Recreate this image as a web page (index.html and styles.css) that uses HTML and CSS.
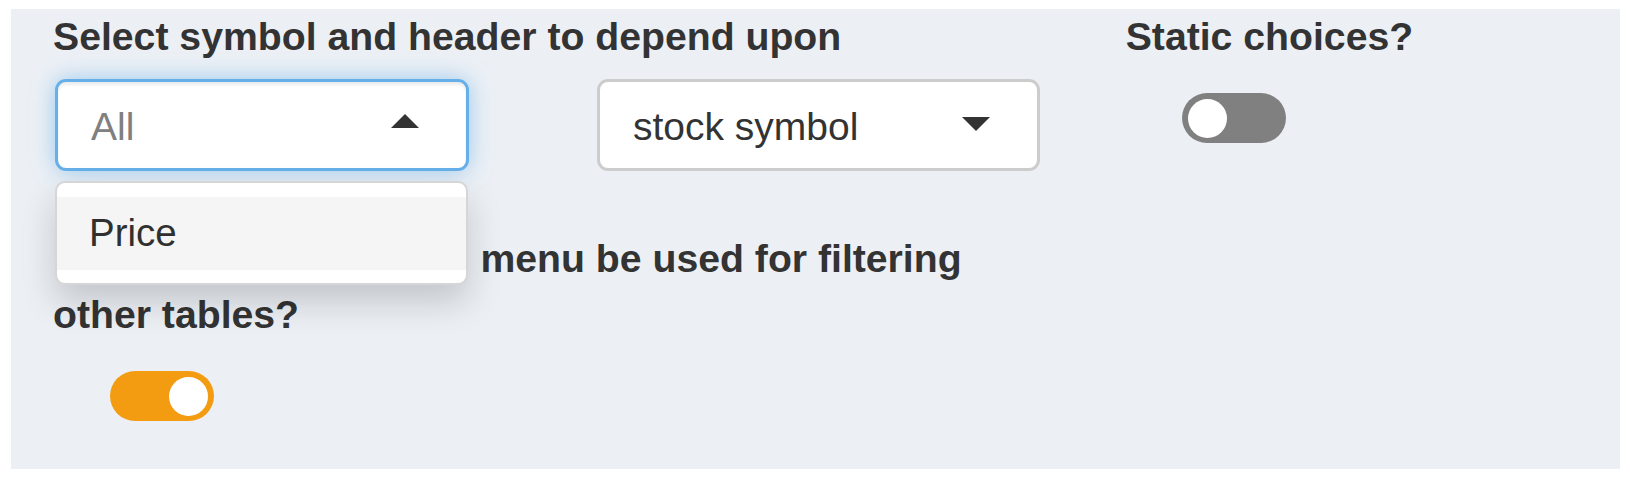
FILE: index.html
```html
<!DOCTYPE html>
<html lang="en">
<head>
<meta charset="utf-8">
<title>Filter settings</title>
<link rel="stylesheet" href="styles.css">
</head>
<body>
<div class="panel">
  <div class="col-main">
    <div class="group group-first">
      <label class="label">Select symbol and header to depend upon</label>
      <div class="select-row">
        <div class="select-wrap select-a">
          <div class="select select-focus">
            <span class="select-text placeholder">All</span>
            <span class="arrow arrow-up"></span>
          </div>
          <div class="dropdown">
            <div class="option active">Price</div>
          </div>
        </div>
        <div class="select-wrap select-b">
          <div class="select">
            <span class="select-text">stock symbol</span>
            <span class="arrow arrow-down"></span>
          </div>
        </div>
      </div>
    </div>
    <div class="group group-second">
      <label class="label">Should this dropdown menu be used for filtering other tables?</label>
      <div class="switch switch-on"><span class="knob"></span></div>
    </div>
  </div>
  <div class="col-side">
    <div class="group">
      <label class="label">Static choices?</label>
      <div class="switch switch-off"><span class="knob"></span></div>
    </div>
  </div>
</div>
</body>
</html>
```
FILE: styles.css
```css
html, body {
  margin: 0;
  padding: 0;
  background: #ffffff;
}

body {
  font-family: "Liberation Sans", Arial, Helvetica, sans-serif;
  color: #333333;
}

.panel {
  margin: 9px 0 0 11px;
  width: 1609px;
  height: 460px;
  box-sizing: border-box;
  padding: 0 42px;
  background: #ecf0f5;
  display: flex;
  gap: 84px;
}

.col-main {
  flex: 0 0 988.7px;
}

.col-side {
  flex: 1 1 auto;
}

.label {
  display: block;
  font-weight: bold;
  font-size: 39.2px;
  line-height: 56px;
  margin-bottom: 14px;
  color: #333333;
}

.group-second {
  margin-top: 60px;
}

.group-second .label {
  text-indent: 3px;
}

.select-row {
  display: flex;
}

.select-wrap {
  position: relative;
}

.select-a {
  margin-left: 2px;
  width: 414px;
}

.select-b {
  margin-left: 128px;
  width: 443px;
}

.select {
  box-sizing: border-box;
  height: 92px;
  border: 3px solid #cccccc;
  border-radius: 11px;
  background: #ffffff;
  display: flex;
  align-items: center;
  justify-content: space-between;
  padding: 0 47px 0 33px;
}

.select-focus {
  border-color: #66afe9;
  box-shadow: inset 0 3px 3px rgba(0, 0, 0, 0.075), 0 0 22px rgba(102, 175, 233, 0.6);
}

.select-text {
  font-size: 39px;
  line-height: 56px;
  margin-top: 3px;
  color: #333333;
}

.placeholder {
  color: #808080;
}

.arrow {
  width: 0;
  height: 0;
  border-left: 14px solid transparent;
  border-right: 14px solid transparent;
}

.arrow-up {
  border-bottom: 14px solid #333333;
  margin-top: -8px;
}

.arrow-down {
  border-top: 14px solid #333333;
  margin-top: -2px;
}

.dropdown {
  position: absolute;
  top: 102px;
  left: 0;
  width: 413px;
  box-sizing: border-box;
  background: #ffffff;
  border: 2px solid #d6d6d6;
  border-radius: 10px;
  padding: 14px 0 13px;
  box-shadow: 0 17px 34px rgba(0, 0, 0, 0.175);
  z-index: 5;
}

.option {
  height: 73px;
  line-height: 56px;
  padding: 8px 0 0 32px;
  box-sizing: border-box;
  font-size: 38.5px;
  color: #303030;
}

.option.active {
  background: #f5f5f5;
}

.switch {
  width: 104px;
  height: 50px;
  border-radius: 25px;
  box-sizing: border-box;
  display: flex;
  align-items: center;
  padding: 0 6px;
}

.switch .knob {
  width: 39px;
  height: 39px;
  border-radius: 50%;
  background: #ffffff;
}

.switch-off {
  background: #808080;
  margin: 28px 0 0 56px;
}

.switch-on {
  background: #f39c12;
  justify-content: flex-end;
  margin: 28px 0 0 57px;
}
```
